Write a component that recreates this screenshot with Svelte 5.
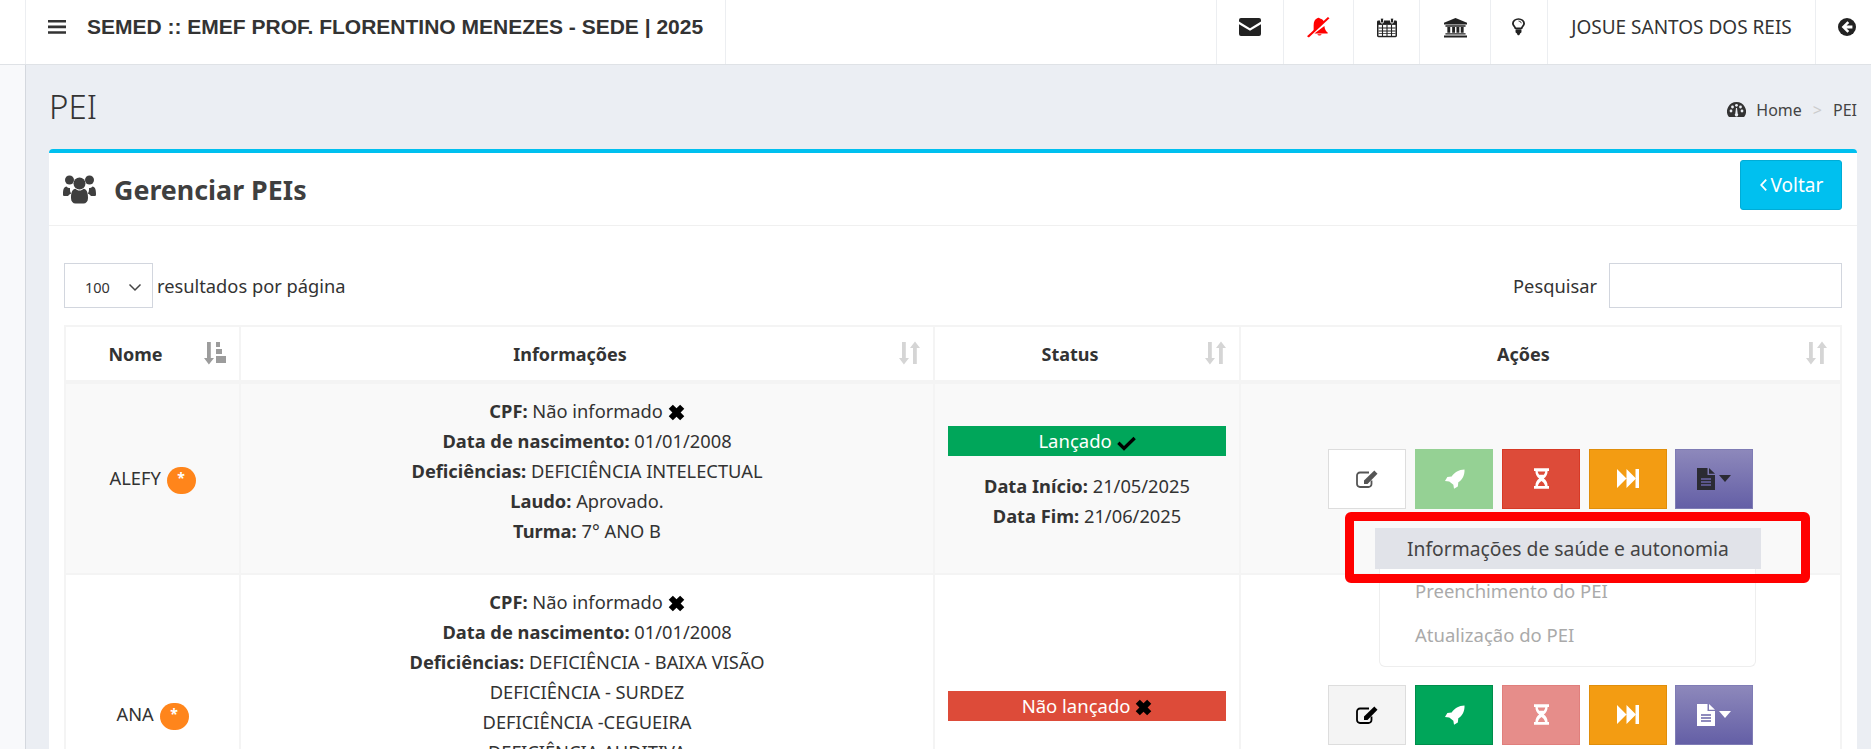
<script>
  const topIcons = [
    { id: "envelope", w: 67 },
    { id: "bell", w: 70, red: true },
    { id: "calendar", w: 66 },
    { id: "bank", w: 71 },
    { id: "bulb", w: 57 }
  ];

  const rows = [
    {
      nome: "ALEFY",
      info: [
        ["Deficiências:", "DEFICIÊNCIA INTELECTUAL"],
        ["Laudo:", "Aprovado."],
        ["Turma:", "7° ANO B"]
      ],
      lancado: true,
      cls: "odd",
      file: "dark",
      faded: "rocket",
      tail: 15
    },
    {
      nome: "ANA",
      info: [
        ["Deficiências:", "DEFICIÊNCIA - BAIXA VISÃO"],
        ["", "DEFICIÊNCIA - SURDEZ"],
        ["", "DEFICIÊNCIA -CEGUEIRA"],
        ["", "DEFICIÊNCIA AUDITIVA"]
      ],
      lancado: false,
      cls: "even",
      file: "light",
      faded: "hourglass",
      tail: 75
    }
  ];
</script>

<svelte:head>
  <title>PEI</title>
</svelte:head>

{#snippet times(size)}
  <svg class="inl" width={size} height={size} viewBox="1 1 14 14"><path d="M1.600 5 5 1.600 8 4.600l3-3L14.400 5l-3 3 3 3-3.400 3.400-3-3-3 3L1.600 11l3-3z" fill="#000" /></svg>
{/snippet}

{#snippet sortIcon()}
  <svg width="21" height="24" viewBox="0 0 21 24" fill="#d5d5d5"><path d="M3 1h3.800v16H10l-5.100 6.500L0 17h3z" /><path d="M14 23V7h-3l5-6.500L21 7h-3.200v16z" /></svg>
{/snippet}

<div class="page">
  <header class="topbar">
    <div class="gutter"></div>
    <div class="brand">
      <svg width="18" height="14" viewBox="0 0 18 14" fill="#333"><path d="M0 0h18v2.600H0zM0 5.600h18v2.600H0zM0 11.200h18v2.600H0z" /></svg>
      <span>SEMED :: EMEF PROF. FLORENTINO MENEZES - SEDE | 2025</span>
    </div>
    <div class="spacer"></div>
    {#each topIcons as t}
      <div class="navitem" style="width: {t.w}px">
        {#if t.id === "envelope"}
          <svg width="22" height="18" viewBox="0 0 22 18" fill="#222"><path d="M2 0h18a2 2 0 0 1 2 2v1.600l-11 6.600L0 3.600V2a2 2 0 0 1 2-2z" /><path d="M0 6.200l11 6.600 11-6.600V16a2 2 0 0 1-2 2H2a2 2 0 0 1-2-2z" /></svg>
        {:else if t.id === "bell"}
          <svg width="23" height="21" viewBox="1 1 22.500 23" preserveAspectRatio="none" fill="#f00"><path d="M11 2.500a1.400 1.400 0 0 1 2.600.2c2.200.5 3.600 2 4.100 3.400L7.500 16.800V10c0-3.800 1.200-6.200 3.500-7.500z" /><path d="M18 10.800c.3 3.500 1.500 6 3.200 7.200v1H8.200z" /><path d="M11 20h4.400a2.500 2.500 0 0 1-4.400 0z" /><path d="M21.500 1 23 2.500 2.800 23.500 1 22z" /></svg>
        {:else if t.id === "calendar"}
          <svg width="20" height="21" viewBox="0 0 20 24" preserveAspectRatio="none"><path d="M1.500 4h17a1.500 1.500 0 0 1 1.500 1.500v16a1.500 1.500 0 0 1-1.500 1.500h-17A1.500 1.500 0 0 1 0 21.500v-16A1.500 1.500 0 0 1 1.500 4z" fill="#222" /><path d="M1.500 9h17v12.500h-17z" fill="#fff" /><path d="M1.500 12.500h17M1.500 16h17M1.500 19h17M5.500 9v13M10 9v13M14.500 9v13" stroke="#222" stroke-width="1.100" /><rect x="3.500" y="1" width="3" height="6" rx="1.500" fill="#222" stroke="#fff" /><rect x="13.500" y="1" width="3" height="6" rx="1.500" fill="#222" stroke="#fff" /></svg>
        {:else if t.id === "bank"}
          <svg width="23" height="21" viewBox="0 0 24 24" preserveAspectRatio="none" fill="#222"><path d="M12 1 24 6.500V8.500H0V6.500z" /><path d="M1.500 9.500h21V11h-21zM3.500 11.500h3V18h-3zM8.500 11.500h3V18h-3zM13 11.500h3V18h-3zM17.500 11.500h3V18h-3zM1.500 18.500h21V20h-21zM0 21h24v2.500H0z" /></svg>
        {:else}
          <svg class="bulb" width="13" height="18" viewBox="0 0 14 24" preserveAspectRatio="none"><path d="M7 1.200a6 6 0 0 1 6 6c0 2.500-2 3.800-2.600 6.300H3.600C3 11 1 9.700 1 7.200a6 6 0 0 1 6-6z" fill="#fff" stroke="#222" stroke-width="2" /><path d="M3.800 15h6.400v3.800a1.500 1.500 0 0 1-1.300 1.500C8.500 22 7.800 23 7 23s-1.500-1-1.900-2.700a1.500 1.500 0 0 1-1.300-1.500z" fill="#222" /><path d="M7 4a3.200 3.200 0 0 1 3 3" fill="none" stroke="#222" /></svg>
        {/if}
      </div>
    {/each}
    <div class="navitem user">JOSUE SANTOS DOS REIS</div>
    <div class="navitem back">
      <svg width="18" height="18" viewBox="0 0 20 20"><circle cx="10" cy="10" r="10" fill="#222" /><path d="M10.500 3.500 12.500 5.500 9.500 8.400H16v3.200H9.500l3 2.900-2 2L4 10z" fill="#fff" /></svg>
    </div>
  </header>

  <div class="shell">
    <aside class="sidebar"></aside>
    <main class="content">
      <div class="pagehead">
        <h1>PEI</h1>
        <nav class="crumbs">
          <svg width="19" height="16" viewBox="0 0 19 16"><path d="M9.500 0a9.500 9.500 0 0 1 8 14.600 1 1 0 0 1-.8.400H2.300a1 1 0 0 1-.8-.4A9.500 9.500 0 0 1 9.500 0z" fill="#333" /><circle cx="4" cy="9" r="1.400" fill="#ebeef3" /><circle cx="5.500" cy="5" r="1.400" fill="#ebeef3" /><circle cx="9.500" cy="3.300" r="1.400" fill="#ebeef3" /><circle cx="13.500" cy="5" r="1.400" fill="#ebeef3" /><circle cx="15" cy="9" r="1.400" fill="#ebeef3" /><path d="M9 6h1l.7 5.500a1.700 1.700 0 1 1-2.400 0z" fill="#ebeef3" /></svg>
          <span class="home">Home</span>
          <span class="sep">&gt;</span>
          <span>PEI</span>
        </nav>
      </div>

      <section class="box">
        <div class="boxhead">
          <h2>
            <svg width="33" height="30" viewBox="0 0 33 30" fill="#3f3f3f"><circle cx="6.500" cy="6" r="4.500" /><circle cx="26.500" cy="6" r="4.500" /><path d="M0 20c0-5 1-7 3.500-7.500 1 1 2 1.500 3.500 1.500 0 3 0 3.500 1.200 5.500A9 9 0 0 0 5 22H1c-.6 0-1-.6-1-2zM33 20c0 1.400-.4 2-1 2h-4a9 9 0 0 0-3.200-2.500C26 17.500 26 17 26 14c1.500 0 2.500-.5 3.500-1.500C32 13 33 15 33 20z" /><circle cx="16.500" cy="9.500" r="6" /><path d="M8 24c0-6 1.500-9 4.500-9.200 1 1.200 2.400 1.800 4 1.800s3-.6 4-1.800C23.500 15 25 18 25 24c0 3.600-2 5.500-4.500 5.500h-8C10 29.500 8 27.600 8 24z" /></svg>
            <span>Gerenciar PEIs</span>
          </h2>
          <button class="voltar">
            <svg width="9" height="16" viewBox="0 0 10 16"><path d="M8 2 2.500 8 8 14" fill="none" stroke="#fff" stroke-width="2" /></svg>
            Voltar
          </button>
        </div>

        <div class="boxbody">
          <div class="filters">
            <label class="length">
              <span class="fakeselect">
                <span>100</span>
                <svg width="14" height="9" viewBox="0 0 14 9"><path d="M1.500 1.500 7 7l5.500-5.500" fill="none" stroke="#444" stroke-width="1.500" /></svg>
              </span>
              resultados por página
            </label>
            <label class="search">
              Pesquisar
              <span class="fakeinput"></span>
            </label>
          </div>

          <table>
            <thead>
              <tr>
                <th class="c1">
                  Nome
                  <span class="sort">
                    <svg width="22" height="24" viewBox="0 0 22 24" fill="#9c9c9c"><path d="M3 1h3.800v16H10l-5.100 6.500L0 17h3z" /><path d="M12 1h4v5h-4zM12 8h6v5h-6zM12 15h10v7H12z" /></svg>
                  </span>
                </th>
                <th class="c2">Informações <span class="sort">{@render sortIcon()}</span></th>
                <th class="c3">Status <span class="sort">{@render sortIcon()}</span></th>
                <th class="c4">Ações <span class="sort">{@render sortIcon()}</span></th>
              </tr>
            </thead>
            <tbody>
              {#each rows as r}
                <tr class={r.cls}>
                  <td class="nome">
                    {r.nome}
                    <span class="badge">*</span>
                  </td>
                  <td class="info">
                    <div><b>CPF:</b> Não informado {@render times(17)}</div>
                    <div><b>Data de nascimento:</b> 01/01/2008</div>
                    {#each r.info as line}
                      <div>{#if line[0]}<b>{line[0]}</b>{" "}{/if}{line[1]}</div>
                    {/each}
                    <div style="height: {r.tail}px"></div>
                  </td>
                  <td class="status">
                    {#if r.lancado}
                      <div class="tag green">Lançado
                        <svg class="inl" width="19" height="15" viewBox="0 0 19 15"><path d="M2.500 5.500 7 10 16.500.8l2.300 2.400L7 14.800.2 8z" fill="#000" /></svg>
                      </div>
                      <div class="dates"><b>Data Início:</b> 21/05/2025</div>
                      <div><b>Data Fim:</b> 21/06/2025</div>
                    {:else}
                      <div class="tag red">Não lançado {@render times(17)}</div>
                      <div class="nodates"></div>
                    {/if}
                  </td>
                  <td class="acoes">
                    <div class="btns">
                      <button class="btn edit" class:dim={r.lancado}>
                        <svg width="22" height="18" viewBox="0 0 22 18"><path d="M15.500 10.500V14a3 3 0 0 1-3 3H4a3 3 0 0 1-3-3V5.500a3 3 0 0 1 3-3h9" fill="none" stroke={r.lancado ? "#555" : "#000"} stroke-width="1.800" /><path d="M18.300.6l3.200 3.200L11.500 14H8v-3.500z" fill={r.lancado ? "#555" : "#000"} /></svg>
                      </button>
                      <button class="btn rocket" class:soft={r.faded === "rocket"}>
                        <svg width="21" height="20" viewBox="0 0 22 21" fill="#fff"><path d="M21.500.5c.3 6-2 10.500-6.500 13.500l-.5 4.500-4 2.300-.7-4.300L5.500 13 1 12.500 3.500 8.500 8 8C11 3.500 15.500.5 21.500.5z" /></svg>
                      </button>
                      <button class="btn hourglass" class:soft={r.faded === "hourglass"}>
                        <svg width="15" height="21" viewBox="0 0 16 22"><path d="M0 0h16v3h-1.500c0 4-1.700 6.300-4 8 2.300 1.700 4 4 4 8H16v3H0v-3h1.500c0-4 1.700-6.300 4-8-2.300-1.700-4-4-4-8H0z" fill="#fff" /><path d="M4 3.500h8c-.2 1.500-.8 2.500-1.500 3.500h-5C4.800 6 4.200 5 4 3.500zM4.200 19c.4-2.300 2-4.200 3.800-5.300 1.800 1.100 3.400 3 3.800 5.300z" fill={r.faded === "hourglass" ? "#e68d8a" : "#dd4b39"} /></svg>
                      </button>
                      <button class="btn forward">
                        <svg width="22" height="19" viewBox="0 0 22 18" preserveAspectRatio="none" fill="#fff"><path d="M0 0l9.500 9L0 18zM9.500 0 19 9l-9.500 9z" /><path d="M18.500 0H22v18h-3.500z" /></svg>
                      </button>
                      <button class="btn file">
                        <svg width="18" height="22" viewBox="0 0 18 22"><path d="M0 0h10.500v7H18v15H0z" fill={r.file === "dark" ? "#2b2b33" : "#fff"} /><path d="M12 0l6 5.800h-6z" fill={r.file === "dark" ? "#2b2b33" : "#fff"} /><path d="M4 11h10M4 14h10M4 17h10" stroke="#6b66a8" stroke-width="1.300" /></svg>
                        <svg width="12" height="7" viewBox="0 0 12 7"><path d="M0 0h12L6 7z" fill={r.file === "dark" ? "#2b2b33" : "#fff"} /></svg>
                      </button>
                    </div>
                  </td>
                </tr>
              {/each}
            </tbody>
          </table>
        </div>
      </section>
    </main>
  </div>

  <div class="menu">
    <div class="menuitem active">Informações de saúde e autonomia</div>
    <div class="menuitem">Preenchimento do PEI</div>
    <div class="menuitem">Atualização do PEI</div>
  </div>
  <div class="highlight"></div>
</div>

<style>
  :global(body) {
    margin: 0;
    background: #ebeef3;
  }
  .page {
    position: relative;
    height: 749px;
    overflow: hidden;
    font-family: "Noto Sans", "Open Sans", sans-serif;
    font-size: 18.300px;
    color: #333;
  }
  .topbar {
    display: flex;
    height: 64px;
    background: #fff;
    border-bottom: 1px solid #dfe2e6;
  }
  .gutter {
    width: 25px;
    border-right: 1px solid #eceef1;
  }
  .brand {
    width: 700px;
    display: flex;
    align-items: center;
    gap: 21px;
    padding-left: 22px;
    padding-bottom: 10px;
    box-sizing: border-box;
    border-right: 1px solid #eceef1;
    font-family: "Liberation Sans", Arial, sans-serif;
    font-weight: 700;
    font-size: 21px;
    color: #333;
    white-space: nowrap;
  }
  .spacer {
    flex: 1;
  }
  .navitem {
    display: flex;
    align-items: center;
    justify-content: center;
    border-left: 1px solid #eceef1;
    padding-bottom: 10px;
    box-sizing: border-box;
  }
  .bulb {
    margin-right: 2px;
  }
  .user {
    width: 268px;
    font-size: 19px;
    white-space: nowrap;
  }
  .back {
    width: 56px;
    padding-left: 6px;
  }
  .shell {
    display: flex;
  }
  .sidebar {
    width: 25px;
    height: 700px;
    background: #f8f9fb;
    border-right: 1px solid #d4d8de;
  }
  .content {
    flex: 1;
    padding: 0 14px 0 23px;
    min-width: 0;
  }
  .pagehead {
    height: 84px;
    display: flex;
    align-items: center;
    justify-content: space-between;
  }
  h1 {
    margin: 0 0 1px;
    font-size: 33px;
    font-weight: 300;
    color: #333;
  }
  .crumbs {
    display: flex;
    align-items: center;
    gap: 9px;
    font-size: 16px;
    margin-top: 5px;
    color: #444;
  }
  .home {
    margin-left: 1px;
  }
  .sep {
    color: #ccc;
    margin: 0 2px;
  }
  .box {
    background: #fff;
    border-top: 4px solid #00c0ef;
    border-radius: 4px 4px 0 0;
  }
  .boxhead {
    height: 73px;
    border-bottom: 1px solid #f0f0f0;
    display: flex;
    align-items: center;
    justify-content: space-between;
    padding: 0 15px 0 14px;
    box-sizing: border-box;
  }
  h2 {
    margin: 0;
    display: flex;
    align-items: center;
    gap: 18px;
    font-size: 26.800px;
    font-weight: 700;
    color: #3f3f3f;
  }
  .voltar {
    width: 102px;
    height: 50px;
    margin-bottom: 8px;
    background: #00c0ef;
    border: 1px solid #00acd6;
    border-radius: 3px;
    color: #fff;
    font: inherit;
    font-size: 19px;
    display: flex;
    align-items: center;
    justify-content: center;
    gap: 3px;
  }
  .boxbody {
    padding: 38px 15px 0;
  }
  .filters {
    display: flex;
    justify-content: space-between;
    height: 45px;
    margin-bottom: 16px;
  }
  .length,
  .search {
    display: flex;
    align-items: center;
    gap: 4px;
    padding-bottom: 2px;
  }
  .search {
    gap: 12px;
  }
  .fakeselect {
    width: 89px;
    height: 45px;
    box-sizing: border-box;
    border: 1px solid #d2d6de;
    display: flex;
    align-items: center;
    justify-content: space-between;
    padding: 3px 10px 0 20px;
    font-size: 14.500px;
  }
  .fakeinput {
    width: 233px;
    height: 45px;
    box-sizing: border-box;
    border: 1px solid #d2d6de;
  }
  table {
    width: 100%;
    table-layout: fixed;
    border-collapse: collapse;
    border: 2px solid #f4f4f4;
  }
  th {
    height: 56px;
    box-sizing: border-box;
    position: relative;
    font-size: 18px;
    font-weight: 700;
    text-align: center;
    border: 2px solid #f4f4f4;
    border-bottom-width: 4px;
    padding: 0 34px 0 0;
  }
  .c1 {
    width: 175px;
  }
  .c2 {
    width: 694px;
  }
  .c3 {
    width: 306px;
  }
  .sort {
    position: absolute;
    right: 13px;
    top: 14px;
    line-height: 0;
  }
  td {
    border: 2px solid #f4f4f4;
    text-align: center;
    vertical-align: middle;
    line-height: 30px;
    padding: 12px 13px;
  }
  .odd td {
    background: #f9f9f9;
  }
  .even td {
    background: #fff;
  }
  b {
    font-weight: 700;
  }
  .inl {
    vertical-align: -3px;
  }
  .badge {
    display: inline-block;
    width: 29px;
    height: 27px;
    border-radius: 14px;
    background: #ff851b;
    color: #fff;
    font-size: 14px;
    font-weight: 700;
    line-height: 22px;
    vertical-align: middle;
    margin-left: 1px;
  }
  .tag {
    height: 30px;
    line-height: 30px;
    font-size: 18.500px;
    color: #fff;
  }
  .green {
    background: #00a65a;
  }
  .red {
    background: #dd4b39;
  }
  .dates {
    margin-top: 15px;
  }
  .nodates {
    height: 18px;
  }
  .btns {
    display: flex;
    justify-content: center;
    gap: 9px;
  }
  .btn {
    width: 78px;
    height: 60px;
    padding: 0;
    border: 1px solid transparent;
    display: flex;
    align-items: center;
    justify-content: center;
    gap: 4px;
  }
  .edit {
    background: #f4f4f4;
    border-color: #ddd;
  }
  .edit.dim {
    background: #fff;
  }
  .rocket {
    background: #00a65a;
    border-color: #008d4c;
  }
  .rocket.soft {
    background: #95d194;
    border-color: #95d194;
  }
  .hourglass {
    background: #dd4b39;
    border-color: #d73925;
  }
  .hourglass.soft {
    background: #e68d8a;
    border-color: #e07f7c;
  }
  .forward {
    background: #f39c12;
    border-color: #e08e0b;
  }
  .file {
    background: linear-gradient(#8d88bb, #645fa6);
    border-color: #7f7cb5;
    margin-left: -1px;
  }
  .menu {
    position: absolute;
    left: 1379px;
    top: 528px;
    width: 377px;
    height: 139px;
    box-sizing: border-box;
    background: #fff;
    border: 1px solid #eee;
    border-radius: 0 0 6px 6px;
    border-top: 0;
    font-size: 18.500px;
    color: #aaa;
  }
  .menuitem {
    height: 44px;
    line-height: 44px;
    padding-left: 35px;
    white-space: nowrap;
  }
  .menuitem.active {
    height: 41px;
    line-height: 41px;
    margin: 0 -6px 0 -5px;
    background: #e1e3e9;
    color: #444;
    padding-left: 32px;
    font-size: 19.300px;
  }
  .highlight {
    position: absolute;
    left: 1345px;
    top: 512px;
    width: 465px;
    height: 71px;
    box-sizing: border-box;
    border: 9px solid #f00;
    border-radius: 6px;
    pointer-events: none;
  }
</style>
